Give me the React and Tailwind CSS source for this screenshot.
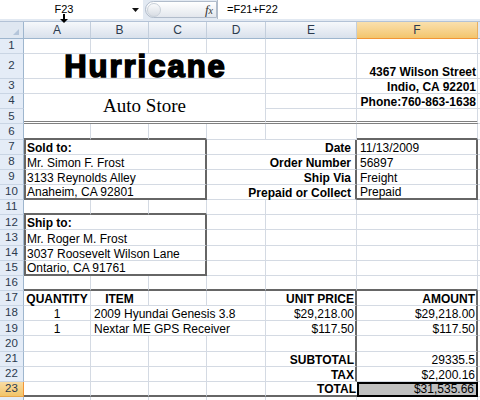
import { Fragment } from "react";

const RB = {
  thin: "border-r border-r-[#d4dae3]",
  thick: "border-r-2 border-r-[#666666]",
  none: "",
};
const BB = {
  thin: "border-b border-b-[#d4dae3]",
  thick: "border-b-2 border-b-[#666666]",
  dbl: "border-b-[3px] border-double border-b-[#808080]",
  none: "",
};
const SPAN = { 1: "", 2: "col-span-2", 3: "col-span-3", 4: "col-span-4" };
const ALIGN = {
  l: "justify-start pl-[3px]",
  l1: "justify-start pl-[1px]",
  r: "justify-end pr-[2px]",
  r1: "justify-end pr-[1px]",
  r4: "justify-end pr-[4px]",
  c: "justify-center",
};

function Cell({ span = 1, r = "thin", b = "thin", l, align = "l", bold, className = "", children }) {
  return (
    <div
      className={`${SPAN[span]} ${RB[r]} ${BB[b]} ${l ? "border-l-2 border-l-[#666666]" : ""} ${ALIGN[align]} ${
        bold ? "font-bold" : ""
      } flex items-end whitespace-nowrap text-[12px] leading-[12px] ${className}`}
    >
      {children}
    </div>
  );
}

function RowHead({ n, active }) {
  return (
    <div
      className={`flex items-center justify-center border-r border-b text-[11.5px] leading-none ${
        active
          ? "bg-linear-to-b from-[#f9dca3] to-[#f2c468] border-r-[#f29536] border-b-[#e8a64a] text-[#2b3a4e]"
          : "bg-[#e4ecf7] border-r-[#9eb6ce] border-b-[#c9d5e4] text-[#2b3a4e]"
      }`}
    >
      {n}
    </div>
  );
}

function ColHead({ label, active }) {
  return (
    <div
      className={`flex items-center justify-center border-r border-b text-[12px] leading-none ${
        active
          ? "bg-linear-to-b from-[#fae0ad] to-[#f3c56c] border-r-[#e8b060] border-b-[#f29536] text-[#2b3a4e]"
          : "bg-linear-to-b from-[#f6f8fb] to-[#d9e1ec] border-r-[#c3cedc] border-b-[#9eb6ce] text-[#2b3a4e]"
      }`}
    >
      {label}
    </div>
  );
}

function FormulaBar() {
  return (
    <div className="relative flex h-[22px] bg-[#e2e9f2] border-b border-b-[#b3c2d6]">
      <div className="flex h-[19px] w-[143px] items-center bg-white">
        <div className="w-[128px] text-center text-[11px]">F23</div>
        <svg width="7" height="4" viewBox="0 0 7 4" className="ml-[4px]">
          <path d="M0 0h7L3.5 4z" fill="#111" />
        </svg>
      </div>
      <div className="ml-[2px] mt-[1px] flex h-[17px] w-[72px] items-center rounded-l-full border border-[#b1bccb] bg-linear-to-b from-white to-[#e3e7ed]">
        <div className="ml-[1px] h-[14px] w-[14px] rounded-full border border-[#c9d0d9] bg-linear-to-b from-[#fafbfc] to-[#d8dde4]" />
        <span className="ml-auto mr-[3px] font-['Liberation_Serif',serif] text-[13px] italic leading-none text-[#333]">
          f<span className="text-[10px]">x</span>
        </span>
      </div>
      <div className="flex h-[19px] flex-1 items-center border-l border-l-[#b1bccb] bg-white pl-[9px] text-[11px]">
        =F21+F22
      </div>
      <svg width="8" height="9" viewBox="0 0 8 9" className="absolute left-[60px] top-[14px]">
        <path d="M3 0h2v5h3L4 9 0 5h3z" fill="#000" />
      </svg>
    </div>
  );
}

export default function App() {
  const blank = (n, opts = {}) =>
    Array.from({ length: n }).map((_, i) => <Cell key={i} {...opts} />);

  return (
    <div className="h-[400px] w-[480px] overflow-hidden bg-white font-['Liberation_Sans',Arial,sans-serif] text-black">
      <FormulaBar />
      <div className="grid grid-cols-[24px_67px_58px_58px_59px_91px_121px_2px] grid-rows-[17px_15px_25px_repeat(22,15.15px)]">
        {/* header */}
        <div className="relative border-r border-b border-r-[#9eb6ce] border-b-[#9eb6ce] bg-[#dfe7f1]">
          <svg width="6" height="6" viewBox="0 0 6 6" className="absolute bottom-[3px] right-[4px]">
            <path d="M6 0v6H0z" fill="#b4c5da" />
          </svg>
        </div>
        <ColHead label="A" />
        <ColHead label="B" />
        <ColHead label="C" />
        <ColHead label="D" />
        <ColHead label="E" />
        <ColHead label="F" active />
        <div className="border-b border-b-[#9eb6ce] bg-[#dfe7f1]" />

        {/* 1 */}
        <RowHead n={1} />
        {blank(6)}
        <Cell r="none" />

        {/* 2 */}
        <RowHead n={2} />
        <Cell span={4} align="c" bold className="pl-[2px] text-[31px] leading-[23px] tracking-[2px] [-webkit-text-stroke:1.6px_#000]">
          Hurricane
        </Cell>
        <Cell />
        <Cell align="r1" bold>4367 Wilson Street</Cell>
        <Cell r="none" />

        {/* 3 */}
        <RowHead n={3} />
        <Cell span={4} />
        <Cell />
        <Cell align="r1" bold>Indio, CA 92201</Cell>
        <Cell r="none" />

        {/* 4 */}
        <RowHead n={4} />
        <Cell span={4} b="dbl" align="c" className="row-span-2 pb-[5px] font-['Liberation_Serif',serif] text-[19px] leading-[21px]">
          Auto Store
        </Cell>
        <Cell />
        <Cell align="r1" bold>Phone:760-863-1638</Cell>
        <Cell r="none" />

        {/* 5 */}
        <RowHead n={5} />
        <Cell b="dbl" />
        <Cell b="dbl" />
        <Cell r="none" />

        {/* 6 */}
        <RowHead n={6} />
        {blank(3, { b: "thick" })}
        <Cell />
        <Cell />
        <Cell b="thick" />
        <Cell r="none" />

        {/* 7-10 */}
        {[
          ["Sold to:", "Date", "11/13/2009"],
          ["Mr. Simon F. Frost", "Order Number", "56897"],
          ["3133 Reynolds Alley", "Ship Via", "Freight"],
          ["Anaheim, CA 92801", "Prepaid or Collect", "Prepaid"],
        ].map(([a, d, f], i) => (
          <Fragment key={a}>
            <RowHead n={7 + i} />
            <Cell span={3} l r="thick" b={i === 3 ? "thick" : "thin"} align="l1" bold={i === 0}>
              {a}
            </Cell>
            <Cell span={2} r="thick" align="r4" bold>
              {d}
            </Cell>
            <Cell r="thick" b={i === 3 ? "thick" : "thin"} align="l">
              {f}
            </Cell>
            <Cell r="none" />
          </Fragment>
        ))}

        {/* 11 */}
        <RowHead n={11} />
        {blank(3, { b: "thick" })}
        {blank(3)}
        <Cell r="none" />

        {/* 12-15 */}
        {["Ship to:", "Mr. Roger M. Frost", "3037 Roosevelt Wilson Lane", "Ontario, CA 91761"].map((a, i) => (
          <Fragment key={a}>
            <RowHead n={12 + i} />
            <Cell span={3} l r="thick" b={i === 3 ? "thick" : "thin"} align="l1" bold={i === 0}>
              {a}
            </Cell>
            {blank(3)}
            <Cell r="none" />
          </Fragment>
        ))}

        {/* 16 */}
        <RowHead n={16} />
        {blank(6, { b: "thick" })}
        <Cell r="none" />

        {/* 17 */}
        <RowHead n={17} />
        <Cell align="c" bold>QUANTITY</Cell>
        <Cell align="c" bold>ITEM</Cell>
        <Cell />
        <Cell />
        <Cell r="thick" align="r1" bold>UNIT PRICE</Cell>
        <Cell r="thick" align="r1" bold>AMOUNT</Cell>
        <Cell r="none" />

        {/* 18-19 */}
        {[
          ["2009 Hyundai Genesis 3.8", "$29,218.00"],
          ["Nextar ME GPS Receiver", "$117.50"],
        ].map(([item, price], i) => (
          <Fragment key={item}>
            <RowHead n={18 + i} />
            <Cell align="c">1</Cell>
            <Cell span={3}>{item}</Cell>
            <Cell r="thick" align="r1">{price}</Cell>
            <Cell r="thick" align="r1">{price}</Cell>
            <Cell r="none" />
          </Fragment>
        ))}

        {/* 20 */}
        <RowHead n={20} />
        {blank(4)}
        <Cell r="thick" />
        <Cell r="thick" />
        <Cell r="none" />

        {/* 21 */}
        <RowHead n={21} />
        {blank(4)}
        <Cell r="thick" align="r1" bold>SUBTOTAL</Cell>
        <Cell r="thick" align="r1">29335.5</Cell>
        <Cell r="none" />

        {/* 22 */}
        <RowHead n={22} />
        {blank(4)}
        <Cell r="thick" align="r1" bold>TAX</Cell>
        <Cell r="thick" b="none" align="r1" className="border-b border-b-[#d4dae3]">$2,200.16</Cell>
        <Cell r="none" />

        {/* 23 */}
        <RowHead n={23} active />
        {blank(4, { b: "thick" })}
        <Cell r="none" b="thick" align="r1" bold>TOTAL</Cell>
        <Cell r="none" b="none" align="r" className="border-2 border-black bg-[#c0c0c0] pr-[1px]">
          $31,535.66
        </Cell>
        <Cell r="none" />

        {/* 24, only a sliver shows */}
        <RowHead n="" />
        {blank(6)}
        <Cell r="none" />
      </div>
    </div>
  );
}
